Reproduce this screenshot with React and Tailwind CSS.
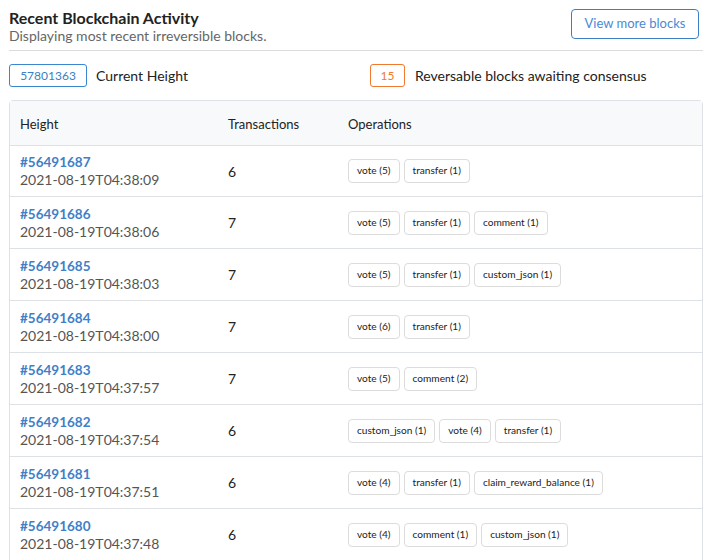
const rows = [
  { h: "56491687", t: "2021-08-19T04:38:09", n: 6, ops: ["vote (5)", "transfer (1)"] },
  { h: "56491686", t: "2021-08-19T04:38:06", n: 7, ops: ["vote (5)", "transfer (1)", "comment (1)"] },
  { h: "56491685", t: "2021-08-19T04:38:03", n: 7, ops: ["vote (5)", "transfer (1)", "custom_json (1)"] },
  { h: "56491684", t: "2021-08-19T04:38:00", n: 7, ops: ["vote (6)", "transfer (1)"] },
  { h: "56491683", t: "2021-08-19T04:37:57", n: 7, ops: ["vote (5)", "comment (2)"] },
  { h: "56491682", t: "2021-08-19T04:37:54", n: 6, ops: ["custom_json (1)", "vote (4)", "transfer (1)"] },
  { h: "56491681", t: "2021-08-19T04:37:51", n: 6, ops: ["vote (4)", "transfer (1)", "claim_reward_balance (1)"] },
  { h: "56491680", t: "2021-08-19T04:37:48", n: 6, ops: ["vote (4)", "comment (1)", "custom_json (1)"] },
];

export default function App() {
  return (
    <div
      className="w-[712px] h-[560px] overflow-hidden bg-white px-[9px] pt-[9px] text-[#222]"
      style={{ fontFamily: "Lato, 'Open Sans', sans-serif" }}
    >
      <div className="flex h-[42px] items-start justify-between border-b border-[#dcdcdc]">
        <div>
          <div className="text-[16px] font-bold leading-[18px] text-[#222]">Recent Blockchain Activity</div>
          <div className="text-[14px] leading-[18px] text-[#666]">Displaying most recent irreversible blocks.</div>
        </div>
        <button className="mr-[4px] h-[30px] w-[128px] rounded-[4px] border border-[#3a7fc4] text-[13px] text-[#4a8ad4]">
          View more blocks
        </button>
      </div>

      <div className="mt-[13px] flex h-[23px] items-center">
        <div className="flex w-[361px] items-center gap-[9px]">
          <span className="flex h-[23px] w-[78px] items-center justify-center rounded-[3px] border border-[#3a87d0] text-[12px] text-[#3a7fc4]">
            57801363
          </span>
          <span className="text-[14px] text-[#222]">Current Height</span>
        </div>
        <div className="flex items-center gap-[10px]">
          <span className="flex h-[23px] w-[35px] items-center justify-center rounded-[3px] border border-[#f07a2e] text-[12px] text-[#f07a2e]">
            15
          </span>
          <span className="text-[14px] text-[#222]">Reversable blocks awaiting consensus</span>
        </div>
      </div>

      <div className="mt-[13px] w-[694px] rounded-t-[4px] border border-[#dee2e6]">
        <div className="grid h-[44px] grid-cols-[208px_120px_1fr] items-center bg-[#f8f9fa] pt-[3px] text-[13px] text-[#222]">
          <div className="pl-[10px]">Height</div>
          <div className="pl-[10px]">Transactions</div>
          <div className="pl-[10px]">Operations</div>
        </div>
        {rows.map((r, i) => (
          <div
            key={r.h}
            className={
              i === 0
                ? "grid h-[51px] grid-cols-[208px_120px_1fr] items-center border-t border-[#dee2e6]"
                : "grid h-[52px] grid-cols-[208px_120px_1fr] items-center border-t border-[#dee2e6]"
            }
          >
            <div className="pl-[10px] leading-[17px]">
              <div className="text-[13.5px] font-bold text-[#3f7fc8]">#{r.h}</div>
              <div className="text-[14px] text-[#555]">{r.t}</div>
            </div>
            <div className="pl-[10px] text-[14px] text-[#222]">{r.n}</div>
            <div className="flex gap-[4px] pl-[10px]">
              {r.ops.map((o) => (
                <span
                  key={o}
                  className="flex h-[24px] items-center rounded-[4px] border border-[#dcdcdc] px-[8px] text-[10.15px] text-[#222]"
                >
                  {o}
                </span>
              ))}
            </div>
          </div>
        ))}
      </div>
    </div>
  );
}
